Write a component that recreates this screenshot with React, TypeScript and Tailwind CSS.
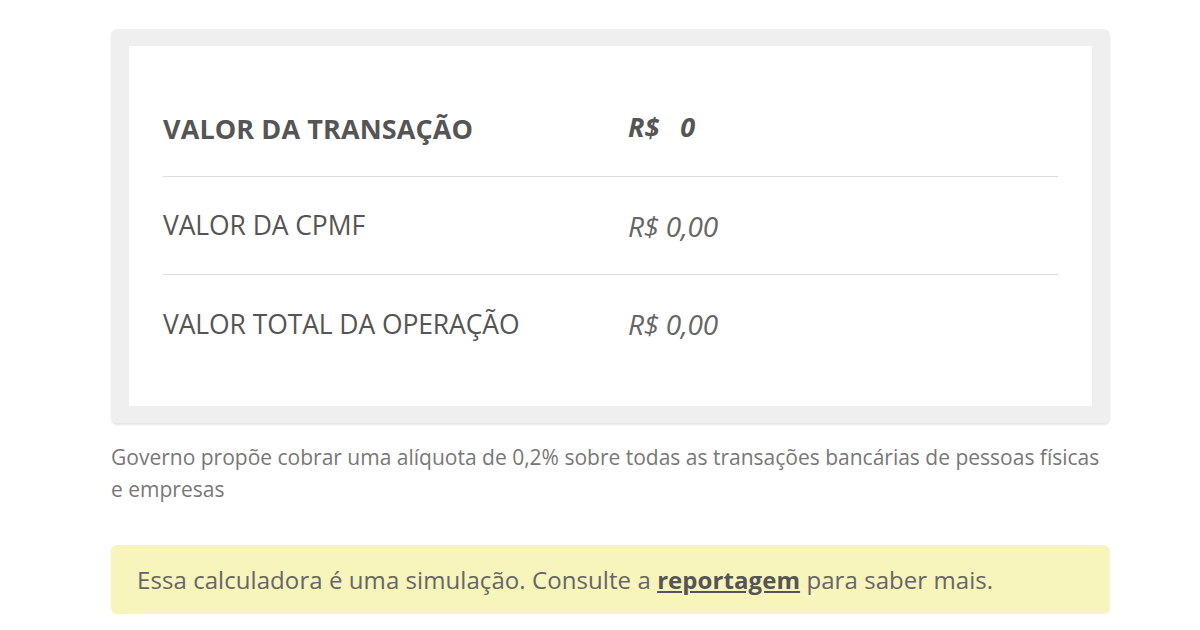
import React from "react";

const font = { fontFamily: '"Open Sans", "Noto Sans", sans-serif' };

function Row({ label, value, bold, last }: { label: string; value: React.ReactNode; bold?: boolean; last?: boolean }) {
  return (
    <div className={`flex items-center h-[98px] ${last ? "" : "border-b border-[#dcdcdc]"}`}>
      <div className={`w-[465px] text-[#555] ${bold ? "font-bold text-[27px] tracking-[0.1px] pt-[3px]" : "text-[26.5px] tracking-[-0.1px] pt-[1px]"}`}>{label}</div>
      <div className={`italic ${bold ? "font-bold text-[27px] text-[#555]" : "text-[28px] text-[#666] tracking-[-0.3px]"}`}>{value}</div>
    </div>
  );
}

export default function App() {
  return (
    <div className="min-h-[630px] bg-white" style={font}>
      <div className="ml-[111px] w-[999px] pt-[29px]">
        <div className="bg-[#efefef] rounded-[6px] px-[18px] py-[17px] shadow-[0_2px_2px_rgba(0,0,0,0.1)]">
          <div className="bg-white px-[34px] py-[33px]">
            <Row label="VALOR DA TRANSAÇÃO" value={<span>R$&nbsp;&nbsp;&nbsp;0</span>} bold />
            <Row label="VALOR DA CPMF" value="R$ 0,00" />
            <Row label="VALOR TOTAL DA OPERAÇÃO" value="R$ 0,00" last />
          </div>
        </div>
        <p className="mt-[18px] pr-[4px] text-[21px] leading-[32px] text-[#777]">
          Governo propõe cobrar uma alíquota de 0,2% sobre todas as transações bancárias de pessoas físicas e empresas
        </p>
        <div className="mt-[40px] h-[69px] rounded-[6px] bg-[#f7f4bc] flex items-center pl-[26px] text-[24px] tracking-[0.07px] text-[#666]">
          <span>
            Essa calculadora é uma simulação. Consulte a{" "}
            <a className="font-bold underline text-[#555]">reportagem</a> para saber mais.
          </span>
        </div>
      </div>
    </div>
  );
}
